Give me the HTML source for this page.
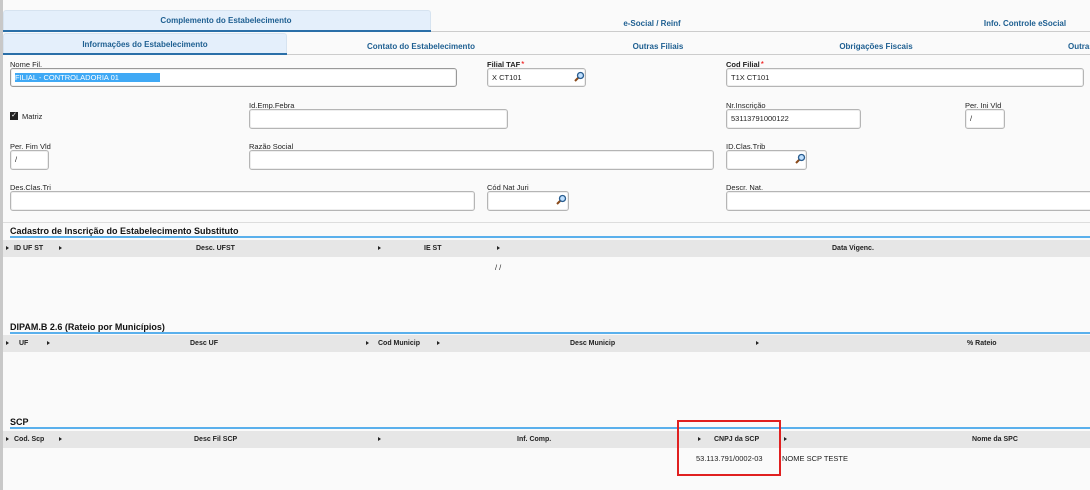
<!DOCTYPE html>
<html><head><meta charset="utf-8">
<style>
*{margin:0;padding:0;box-sizing:border-box}
body{width:1090px;height:490px;background:#fafafa;font-family:"Liberation Sans",sans-serif;font-size:7.5px;color:#222;position:relative;overflow:hidden}
.a{position:absolute}
.strip{left:0;top:0;width:3px;height:490px;background:#c8c8c8}
.tab{font-weight:bold;color:#1e5f91;font-size:8px;text-align:center;white-space:nowrap}
.lbl{font-size:7.5px;color:#222;white-space:nowrap}
.lbl b{font-weight:bold}
.req{color:#e00;font-size:8px;vertical-align:top;margin-left:1px}
.inp{border:1px solid #b5b5b5;border-radius:3px;background:#fff;font-size:7.5px;padding-left:4px;line-height:17px;box-shadow:inset 0 0 0 1px #eee}
.title{font-weight:bold;font-size:9px;color:#111;white-space:nowrap}
.bl{height:2px;background:#5ab0ec;left:10px;right:0}
.hdr{left:3px;right:0;height:17px;background:#e6e6e6}
.h{font-weight:bold;font-size:7px;color:#222;white-space:nowrap;line-height:17px}
.ar{width:0;height:0;border-left:3px solid #222;border-top:2.5px solid transparent;border-bottom:2.5px solid transparent}
</style></head><body>
<div class="a strip"></div>

<div class="a" style="left:3px;top:10px;width:428px;height:21px;background:#e4effb;border:1px solid #d6e3f0;border-bottom:none;border-radius:3px 3px 0 0"></div>
<div class="a" style="left:3px;top:30px;width:428px;height:2px;background:#2a6fa8"></div>
<div class="a" style="left:431px;top:31px;width:659px;height:1px;background:#ccc"></div>
<div class="a tab" style="left:3px;top:16px;width:446px">Complemento do Estabelecimento</div>
<div class="a tab" style="left:552px;top:19px;width:200px">e-Social / Reinf</div>
<div class="a tab" style="left:925px;top:19px;width:200px">Info. Controle eSocial</div>

<div class="a" style="left:3px;top:33px;width:284px;height:21px;background:#e4effb;border:1px solid #d6e3f0;border-bottom:none;border-radius:3px 3px 0 0"></div>
<div class="a" style="left:3px;top:53px;width:284px;height:2px;background:#2a6fa8"></div>
<div class="a" style="left:287px;top:54px;width:803px;height:1px;background:#ccc"></div>
<div class="a tab" style="left:3px;top:40px;width:284px">Informações do Estabelecimento</div>
<div class="a tab" style="left:321px;top:42px;width:200px">Contato do Estabelecimento</div>
<div class="a tab" style="left:558px;top:42px;width:200px">Outras Filiais</div>
<div class="a tab" style="left:776px;top:42px;width:200px">Obrigações Fiscais</div>
<div class="a tab" style="left:1068px;top:42px;text-align:left">Outras</div>

<div class="a lbl" style="left:10px;top:60px">Nome Fil.</div>
<div class="a inp" style="left:10px;top:68px;width:447px;height:19px;border-color:#999"><span style="background:#3fa9f5;color:#fff;display:inline-block;line-height:9px;padding:0 2px 0 0;width:145px">FILIAL - CONTROLADORIA 01</span></div>
<div class="a lbl" style="left:487px;top:60px"><b>Filial TAF</b><span class="req">*</span></div>
<div class="a inp" style="left:487px;top:68px;width:99px;height:19px">X CT101</div>
<div class="a lbl" style="left:726px;top:60px"><b>Cod Filial</b><span class="req">*</span></div>
<div class="a inp" style="left:726px;top:68px;width:358px;height:19px">T1X CT101</div>

<div class="a" style="left:10px;top:112px;width:8px;height:8px;background:#222;color:#fff;font-size:7px;line-height:8px;text-align:center">✓</div>
<div class="a lbl" style="left:22px;top:112px">Matriz</div>
<div class="a lbl" style="left:249px;top:101px">Id.Emp.Febra</div>
<div class="a inp" style="left:249px;top:109px;width:259px;height:20px"></div>
<div class="a lbl" style="left:726px;top:101px">Nr.Inscrição</div>
<div class="a inp" style="left:726px;top:109px;width:135px;height:20px">53113791000122</div>
<div class="a lbl" style="left:965px;top:101px">Per. Ini Vld</div>
<div class="a inp" style="left:965px;top:109px;width:40px;height:20px">/</div>

<div class="a lbl" style="left:10px;top:142px">Per. Fim Vld</div>
<div class="a inp" style="left:10px;top:150px;width:39px;height:20px">/</div>
<div class="a lbl" style="left:249px;top:142px">Razão Social</div>
<div class="a inp" style="left:249px;top:150px;width:465px;height:20px"></div>
<div class="a lbl" style="left:726px;top:142px">ID.Clas.Trib</div>
<div class="a inp" style="left:726px;top:150px;width:81px;height:20px"></div>

<div class="a lbl" style="left:10px;top:183px">Des.Clas.Tri</div>
<div class="a inp" style="left:10px;top:191px;width:465px;height:20px"></div>
<div class="a lbl" style="left:487px;top:183px">Cód Nat Juri</div>
<div class="a inp" style="left:487px;top:191px;width:82px;height:20px"></div>
<div class="a lbl" style="left:726px;top:183px">Descr. Nat.</div>
<div class="a inp" style="left:726px;top:191px;width:370px;height:20px"></div>

<svg class="a" style="left:573px;top:71px" width="12" height="12" viewBox="0 0 12 12"><line x1="2" y1="10" x2="6" y2="6" stroke="#8a4a1a" stroke-width="2"/><circle cx="7.5" cy="4.5" r="3" fill="#bfe0ff" stroke="#2a5d8f" stroke-width="1.3"/></svg>
<svg class="a" style="left:794px;top:153px" width="12" height="12" viewBox="0 0 12 12"><line x1="2" y1="10" x2="6" y2="6" stroke="#8a4a1a" stroke-width="2"/><circle cx="7.5" cy="4.5" r="3" fill="#bfe0ff" stroke="#2a5d8f" stroke-width="1.3"/></svg>
<svg class="a" style="left:555px;top:194px" width="12" height="12" viewBox="0 0 12 12"><line x1="2" y1="10" x2="6" y2="6" stroke="#8a4a1a" stroke-width="2"/><circle cx="7.5" cy="4.5" r="3" fill="#bfe0ff" stroke="#2a5d8f" stroke-width="1.3"/></svg>

<div class="a" style="left:3px;top:222px;width:1087px;height:1px;background:#ddd"></div>

<div class="a title" style="left:10px;top:226px">Cadastro de Inscrição do Estabelecimento Substituto</div>
<div class="a bl" style="top:236px"></div>
<div class="a hdr" style="top:240px"></div>
<div class="a ar" style="left:6px;top:246px"></div><div class="a h" style="left:14px;top:240px">ID UF ST</div>
<div class="a ar" style="left:59px;top:246px"></div>
<div class="a h" style="left:196px;top:240px">Desc. UFST</div>
<div class="a ar" style="left:378px;top:246px"></div>
<div class="a h" style="left:424px;top:240px">IE ST</div>
<div class="a ar" style="left:497px;top:246px"></div>
<div class="a h" style="left:832px;top:240px">Data Vigenc.</div>
<div class="a lbl" style="left:495px;top:263px">/ /</div>

<div class="a title" style="left:10px;top:322px">DIPAM.B 2.6 (Rateio por Municípios)</div>
<div class="a bl" style="top:332px"></div>
<div class="a hdr" style="top:335px"></div>
<div class="a ar" style="left:6px;top:341px"></div><div class="a h" style="left:19px;top:335px">UF</div>
<div class="a ar" style="left:47px;top:341px"></div>
<div class="a h" style="left:190px;top:335px">Desc UF</div>
<div class="a ar" style="left:366px;top:341px"></div><div class="a h" style="left:378px;top:335px">Cod Municip</div>
<div class="a ar" style="left:437px;top:341px"></div>
<div class="a h" style="left:570px;top:335px">Desc Municip</div>
<div class="a ar" style="left:756px;top:341px"></div>
<div class="a h" style="left:967px;top:335px">% Rateio</div>

<div class="a title" style="left:10px;top:417px">SCP</div>
<div class="a bl" style="top:427px"></div>
<div class="a hdr" style="top:431px"></div>
<div class="a ar" style="left:6px;top:437px"></div><div class="a h" style="left:14px;top:431px">Cod. Scp</div>
<div class="a ar" style="left:59px;top:437px"></div>
<div class="a h" style="left:194px;top:431px">Desc Fil SCP</div>
<div class="a ar" style="left:378px;top:437px"></div>
<div class="a h" style="left:517px;top:431px">Inf. Comp.</div>
<div class="a ar" style="left:698px;top:437px"></div>
<div class="a h" style="left:714px;top:431px">CNPJ da SCP</div>
<div class="a ar" style="left:784px;top:437px"></div>
<div class="a h" style="left:972px;top:431px">Nome da SPC</div>
<div class="a lbl" style="left:696px;top:454px">53.113.791/0002-03</div>
<div class="a lbl" style="left:782px;top:454px">NOME SCP TESTE</div>
<div class="a" style="left:677px;top:420px;width:104px;height:56px;border:2px solid #e02020"></div>
</body></html>
